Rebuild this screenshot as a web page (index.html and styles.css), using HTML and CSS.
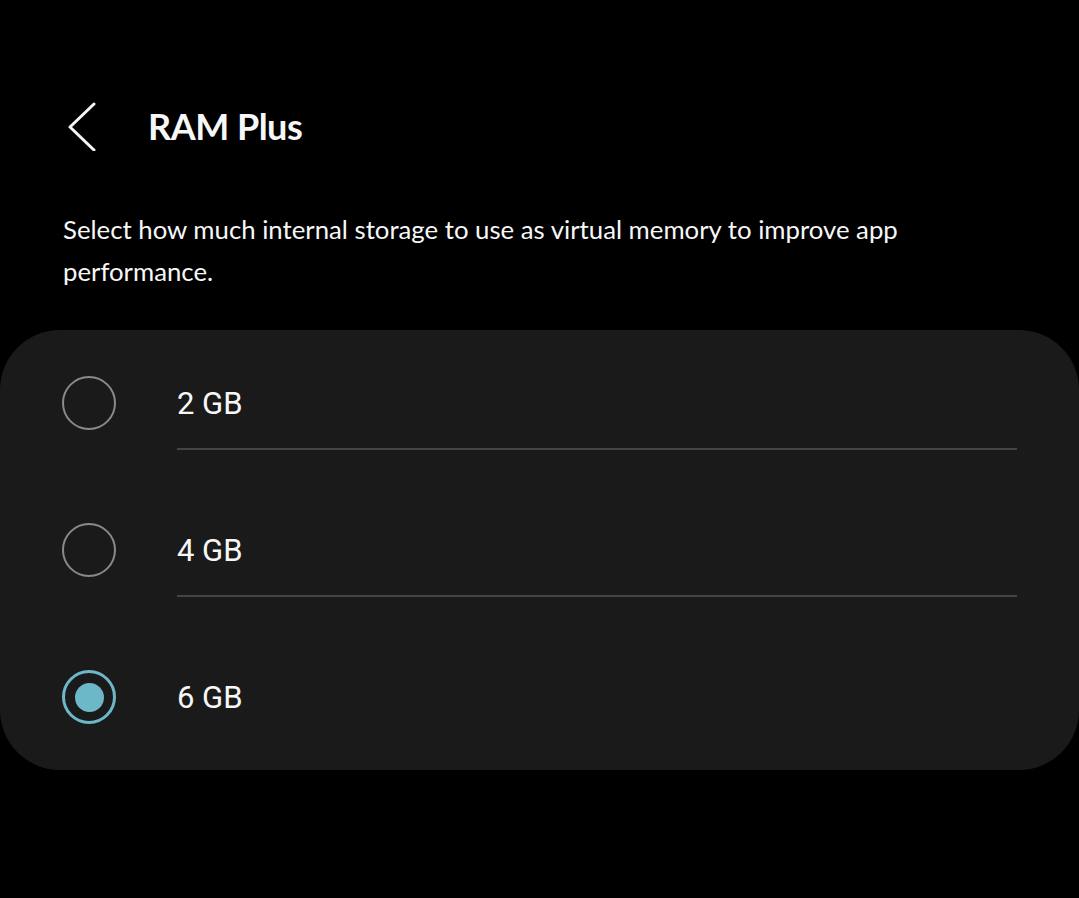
FILE: index.html
```html
<!DOCTYPE html>
<html lang="en">
<head>
    <meta charset="UTF-8">
    <title>RAM Plus</title>
    <link rel="stylesheet" href="styles.css">
</head>
<body>
    <div class="screen">
        <div class="app-bar">
            <button class="back-btn" aria-label="Back">
                <svg width="32" height="50" viewBox="0 0 32 50">
                    <polyline points="28,3 4,26 28,49" fill="none" stroke="#f5f5f5" stroke-width="3" stroke-linecap="round" stroke-linejoin="round"/>
                </svg>
            </button>
            <h1 class="title">RAM Plus</h1>
        </div>

        <p class="description">Select how much internal storage to use as virtual memory to improve app performance.</p>

        <div class="options-card">
            <label class="option">
                <span class="radio"></span>
                <span class="option-label">2 GB</span>
            </label>
            <label class="option">
                <span class="radio"></span>
                <span class="option-label">4 GB</span>
            </label>
            <label class="option selected">
                <span class="radio"></span>
                <span class="option-label last">6 GB</span>
            </label>
        </div>
    </div>
</body>
</html>
```

FILE: styles.css
```css
body {
    margin: 0;
    background-color: #000;
    color: #f7f7f7;
    font-family: Lato, "Noto Sans", sans-serif;
}
.screen {
    width: 1079px;
    height: 898px;
    overflow: hidden;
}
.app-bar {
    display: flex;
    align-items: center;
    height: 60px;
    padding: 96px 0 0 66px;
}
.back-btn {
    background: none;
    border: none;
    padding: 0;
    width: 32px;
    height: 50px;
    cursor: pointer;
}
.title {
    margin: 0 0 0 50px;
    font-size: 36px;
    font-weight: 700;
    letter-spacing: -0.5px;
}
.description {
    margin: 52px 62px 0 63px;
    font-size: 25.75px;
    line-height: 42px;
}
.options-card {
    margin-top: 38px;
    background-color: #1a1a1a;
    border-radius: 60px;
    padding: 26px 0 26px;
    display: flex;
    flex-direction: column;
    gap: 53px;
}
.option {
    display: flex;
    align-items: stretch;
    height: 94px;
    cursor: pointer;
}
.radio {
    box-sizing: border-box;
    width: 54px;
    height: 54px;
    margin: 20px 61px 0 62px;
    border: 2px solid #8a8a8a;
    border-radius: 50%;
    display: flex;
    align-items: center;
    justify-content: center;
}
.option.selected .radio {
    border: 3px solid #6db8c8;
}
.option.selected .radio::after {
    content: "";
    width: 29px;
    height: 29px;
    border-radius: 50%;
    background-color: #6db8c8;
}
.option-label {
    flex: 1;
    margin-right: 62px;
    display: flex;
    align-items: center;
    padding-top: 2px;
    font-family: Roboto, sans-serif;
    font-size: 31px;
    border-bottom: 2px solid #444;
}
.option-label.last {
    border-bottom-color: transparent;
}
```
